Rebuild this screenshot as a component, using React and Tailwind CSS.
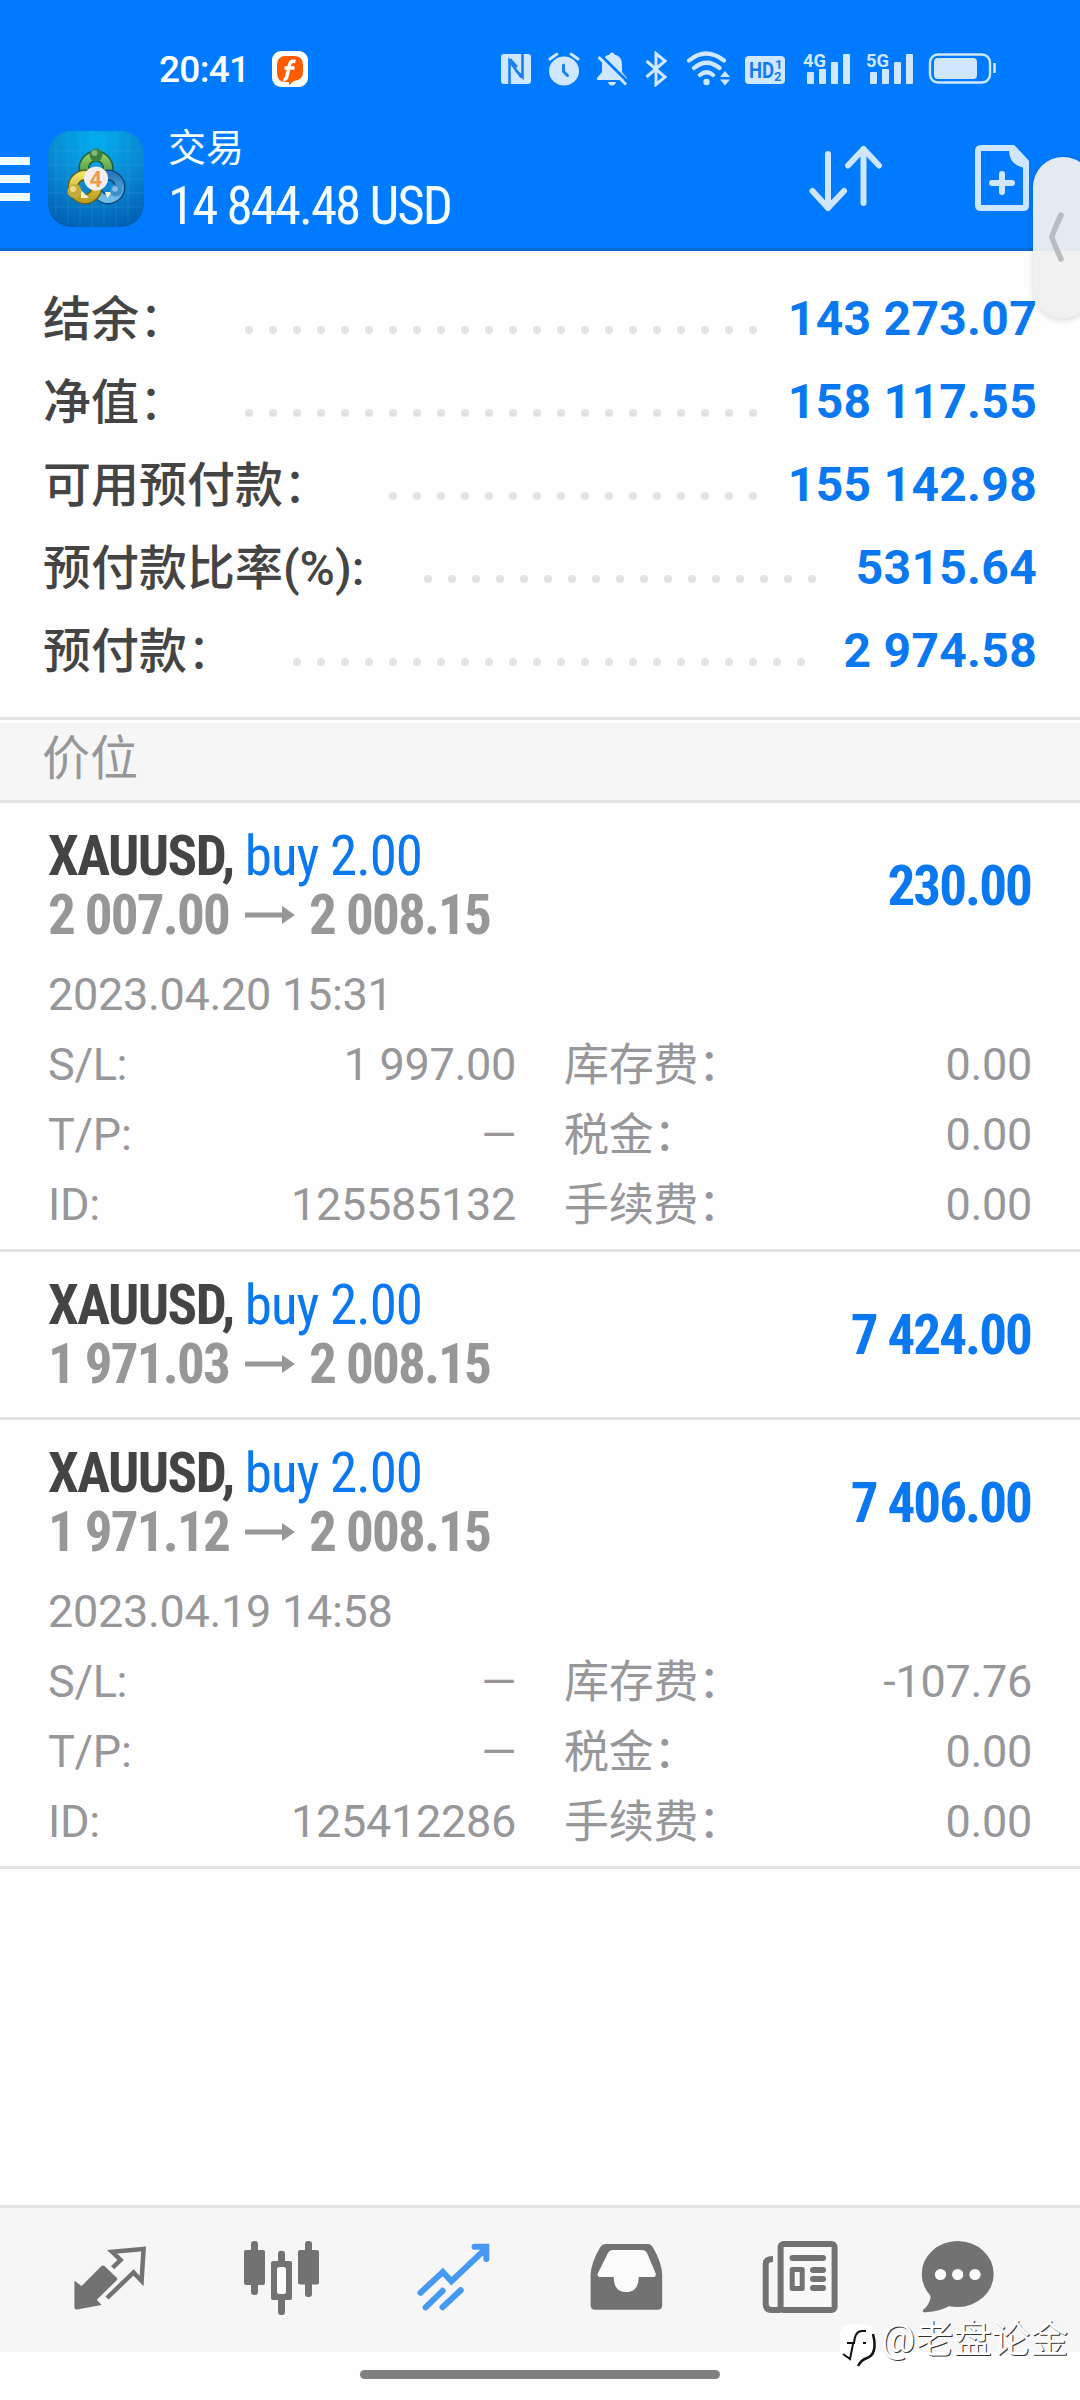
import React from 'react';

const summary = [
  { label: '结余：', value: '143 273.07', dots: 22, end: 'mr-[31px]' },
  { label: '净值：', value: '158 117.55', dots: 22, end: 'mr-[31px]' },
  { label: '可用预付款：', value: '155 142.98', dots: 16, end: 'mr-[31px]' },
  { label: '预付款比率(%):', value: '5315.64', dots: 17, end: 'mr-[40px]' },
  { label: '预付款：', value: '2 974.58', dots: 22, end: 'mr-[39px]' },
];

const positions = [
  {
    open: '2 007.00',
    profit: '230.00',
    time: '2023.04.20 15:31',
    rows: [
      ['S/L:', '1 997.00', '库存费：', '0.00'],
      ['T/P:', '—', '税金：', '0.00'],
      ['ID:', '125585132', '手续费：', '0.00'],
    ],
  },
  { open: '1 971.03', profit: '7 424.00' },
  {
    open: '1 971.12',
    profit: '7 406.00',
    time: '2023.04.19 14:58',
    rows: [
      ['S/L:', '—', '库存费：', '-107.76'],
      ['T/P:', '—', '税金：', '0.00'],
      ['ID:', '125412286', '手续费：', '0.00'],
    ],
  },
];

// the full-width colon stays in regular weight
const Label = ({ text }) => {
  const wide = text.endsWith('：');
  return (
    <>
      {wide ? text.slice(0, -1) : text}
      {wide && <span className="font-normal">：</span>}
    </>
  );
};

const Signal = ({ label, className }) => (
  <svg className={className} width="48" height="40" viewBox="0 -4 48 40" fill="currentColor">
    <text x="0" y="16" fontSize="19" fontWeight="700" textLength="23" lengthAdjust="spacingAndGlyphs">{label}</text>
    <rect x="4" y="21" width="7" height="12" rx="1" />
    <rect x="16" y="18" width="7" height="15" rx="1" />
    <rect x="28" y="11" width="7" height="22" rx="1" />
    <rect x="40" y="3" width="7" height="30" rx="1" />
  </svg>
);

const StatusBar = () => (
  <div className="flex h-[36px] items-center mt-[51px] text-[#cfe7ff]">
    <span className="w-[112px] ml-[159px] pt-[2px] text-[37px] leading-[36px] font-medium text-white tracking-[-0.7px]">20:41</span>
    <svg className="ml-px mr-[192px]" width="36" height="36" viewBox="0 0 36 36">
      <rect width="36" height="36" rx="9" fill="#fff" />
      <path d="M14 5h8q9 0 9 9v7q0 8-9 9l-5 4v-3h-3q-9 0-9-9v-8q0-9 9-9z" fill="#ff5c00" />
      <path d="M23.500 10.500q-5-1.500-6 3.500l-2.500 11q-1 4-3.500 3M12.500 17h10" fill="none" stroke="#fff" strokeWidth="3.500" />
    </svg>
    <svg width="32" height="36" viewBox="0 0 32 36">
      <rect x="1" y="3" width="30" height="30" rx="3" fill="currentColor" />
      <path d="M9.500 33V10l12 16.500M22.500 3v23l-7-7M10 8l7 8" fill="none" stroke="#1a7ff0" strokeWidth="2.600" />
    </svg>
    <svg className="ml-4" width="32" height="36" viewBox="0 0 32 36" fill="none" stroke="currentColor" strokeWidth="3" strokeLinecap="round">
      <ellipse cx="16" cy="20" rx="15" ry="14.500" fill="currentColor" stroke="none" />
      <path d="M2 8l7-5M30 8l-7-5" />
      <path d="M15.500 14v6.500l4 4" stroke="#1a7ff0" />
    </svg>
    <svg className="ml-4" width="32" height="36" viewBox="0 0 32 36" fill="currentColor">
      <path d="M16 1.500q2 0 2.500 2Q26 5 26 14v7l5 6v2H1v-2l5-6v-7Q6 5 13.500 3.500 14 1.500 16 1.500zM12 31h8q-1 3.500-4 3.500T12 31z" />
      <path d="M4.500 4L32 31" stroke="#007aff" strokeWidth="3" />
      <path d="M2.500 6L30 33.500" stroke="currentColor" strokeWidth="3" />
    </svg>
    <svg className="ml-4" width="24" height="36" viewBox="0 0 24 36" fill="none" stroke="currentColor" strokeWidth="3">
      <path d="M2.500 10L21 26l-9 7.500V2.500L21 10 2.500 26" />
    </svg>
    <svg className="ml-[18px]" width="44" height="36" viewBox="0 0 44 36" fill="none" stroke="currentColor" strokeWidth="4.200" strokeLinecap="round">
      <path d="M3 9.500q17-14 35 0M8 17q12.500-10.500 25.500 0M14 24q6.500-5.500 13 0" />
      <circle cx="20.500" cy="31" r="3.200" fill="currentColor" stroke="none" />
      <path d="M34 26l5-6 5 6zM34 28.500l5 6 5-6z" fill="currentColor" stroke="none" />
    </svg>
    <svg className="ml-[15px]" width="40" height="36" viewBox="0 0 40 36">
      <rect y="5" width="40" height="28" rx="4" fill="currentColor" />
      <g fill="#147cf2" fontWeight="700">
        <text x="4" y="27" fontSize="22" textLength="25" lengthAdjust="spacingAndGlyphs">HD</text>
        <text x="30" y="18" fontSize="13">1</text>
        <text x="29" y="30" fontSize="13">2</text>
      </g>
    </svg>
    <Signal label="4G" className="ml-[18px] -mt-1" />
    <Signal label="5G" className="ml-[15px] -mt-1" />
    <svg className="ml-[14px]" width="70" height="36" viewBox="0 0 70 36" fill="none" stroke="currentColor">
      <rect x="2" y="3.500" width="60" height="28" rx="8" strokeWidth="2.400" />
      <rect x="6" y="7" width="43" height="21" rx="4" fill="currentColor" stroke="none" />
      <path d="M66.500 12v10" strokeWidth="2.600" />
    </svg>
  </div>
);

const Logo = () => (
  <svg className="ml-[18px]" width="96" height="96" viewBox="0 0 96 96">
    <defs>
      <radialGradient id="tile" cx="0.5" cy="0.1" r="0.95">
        <stop offset="0" stopColor="#00aef0" />
        <stop offset="0.5" stopColor="#0a8ad2" />
        <stop offset="1" stopColor="#005fb2" />
      </radialGradient>
      <linearGradient id="green" x1="0" y1="0" x2="0" y2="1">
        <stop offset="0" stopColor="#8cc860" />
        <stop offset="1" stopColor="#3a8c3c" />
      </linearGradient>
      <linearGradient id="yellow" x1="0" y1="0" x2="0" y2="1">
        <stop offset="0" stopColor="#f0e060" />
        <stop offset="1" stopColor="#c0a020" />
      </linearGradient>
      <linearGradient id="blue" x1="0" y1="0" x2="0" y2="1">
        <stop offset="0" stopColor="#2878bc" />
        <stop offset="1" stopColor="#74bce8" />
      </linearGradient>
    </defs>
    <rect width="96" height="96" rx="23" fill="url(#tile)" />
    <path d="M8 10v76M20 2v92M32 0v96M44 0v96M56 0v96M68 0v96M80 4v88M4 20h88M0 34h96M0 48h96M0 62h96M2 76h92" stroke="#5cc4f0" strokeOpacity="0.18" fill="none" />
    <g fill="none">
      <circle cx="48" cy="37" r="12" stroke="#1e5c34" strokeWidth="11" />
      <circle cx="48" cy="37" r="12" stroke="url(#green)" strokeWidth="8" />
      <circle cx="60" cy="56" r="12" stroke="#0d4a85" strokeWidth="11" />
      <circle cx="60" cy="56" r="12" stroke="url(#blue)" strokeWidth="8" />
      <circle cx="37" cy="56" r="12" stroke="#5c6420" strokeWidth="11" />
      <circle cx="37" cy="56" r="12" stroke="url(#yellow)" strokeWidth="8" />
    </g>
    <path d="M33 67v-8l8 8zM57 61h8l-6 6z" fill="#e8f0d8" />
    <circle cx="48" cy="24" r="6.500" fill="#3c8040" />
    <circle cx="46.500" cy="22" r="3" fill="#80b878" />
    <circle cx="26.500" cy="60" r="7" fill="#c8aa38" />
    <circle cx="25" cy="58" r="3" fill="#ecdc88" />
    <circle cx="68" cy="59.500" r="6" fill="#3c90cc" />
    <circle cx="67" cy="58" r="2.800" fill="#84c0e8" />
    <circle cx="48" cy="47.500" r="12" fill="#f4eef0" />
    <text x="41.500" y="55.500" fontSize="22" fontWeight="700" fill="#f09a4c">4</text>
  </svg>
);

const Header = () => (
  <header className="h-[251px] bg-[#007aff] border-b-[3px] border-[#0a6ad0] flex flex-col">
    <StatusBar />
    <div className="flex items-center h-[96px] mt-[44px]">
      <div className="w-[30px] flex flex-col gap-[10px]">
        <div className="h-2 bg-[#f0fbff]" />
        <div className="h-2 bg-[#f0fbff]" />
        <div className="h-2 bg-[#f0fbff]" />
      </div>
      <Logo />
      <div className="ml-[24px] w-[640px] pt-[8px] text-[#f4fcff]">
        <div className="text-[38px] leading-[38px]">交易</div>
        <div className="mt-[7px] -mb-px text-[53px] leading-[64px] tracking-[-2px] font-stretch-condensed whitespace-nowrap">14 844.48 USD</div>
      </div>
      <svg className="shrink-0 ml-px" width="76" height="68" viewBox="0 1 76 68" fill="none" stroke="#cfe6ff" strokeWidth="6" strokeLinecap="round" strokeLinejoin="round">
        <path d="M19 10v54M3.500 47L19 64l16-17M54.500 59V5M39 21.500L54.500 5 70 21.500" />
      </svg>
      <svg className="ml-[90px] shrink-0" width="54" height="68" viewBox="0 1 54 68" fill="none" stroke="#cfe6ff" strokeWidth="6" strokeLinejoin="round">
        <path d="M3 7q0-3 3-3h32l13 14v43q0 3-3 3H6q-3 0-3-3z" />
        <path d="M34 4q-1 18 17 20V18L38 4z" fill="#cfe6ff" stroke="none" />
        <path d="M27 30v18M17 39h20" strokeLinecap="round" />
      </svg>
    </div>
  </header>
);

const Summary = () => (
  <section className="h-[466px] pt-[26px] pl-[43px] pr-[43px]">
    {summary.map((row) => (
      <div key={row.label} className="flex items-center h-[83px]">
        <span className="pt-[2px] text-[48px] leading-[83px] font-medium text-[#444] whitespace-nowrap">
          <Label text={row.label} />
        </span>
        <div className={`ml-auto mt-[23px] flex gap-4 ${row.end}`}>
          {Array.from({ length: row.dots }, (_, i) => (
            <div key={i} className="size-2 rounded-full bg-[#e3e3e3]" />
          ))}
        </div>
        <span className="text-[48px] leading-[83px] font-bold tracking-[0.3px] text-[#0a78f0] whitespace-nowrap">{row.value}</span>
      </div>
    ))}
  </section>
);

const Position = ({ item }) => (
  <div className="border-b-[3px] border-[#e2e2e2]">
    <div className="flex items-center justify-between h-[165px] pl-12 pr-[49px] font-bold font-stretch-condensed text-[55px] whitespace-nowrap">
      <div>
        <div className="leading-[59px] tracking-[-1.6px] text-[#444]">
          XAUUSD, <span className="font-normal tracking-[-1px] text-[#0a78f0]">buy 2.00</span>
        </div>
        <div className="flex items-center leading-[59px] tracking-[-1.8px] text-[#97979a]">
          {item.open}
          <svg className="ml-4 mr-[14px]" width="50" height="20" viewBox="0 0 50 20" fill="currentColor">
            <path d="M0 7.500h37V1l13 9-13 9v-6.500H0z" />
          </svg>
          2 008.15
        </div>
      </div>
      <div className="pt-[2px] tracking-[-1.9px] text-[#0a78f0]">{item.profit}</div>
    </div>
    {item.rows && (
      <div className="-mt-2 pl-12 pr-[48px] pb-[9px] text-[45px] leading-[70px] tracking-[-0.3px] text-[#97979a]">
        <div>{item.time}</div>
        {item.rows.map((row) => (
          <div key={row[0]} className="flex">
            <span>{row[0]}</span>
            <span className="ml-auto">{row[1]}</span>
            <div className="flex justify-between w-[468px] ml-[48px]">
              <span className="pt-px -mb-px">
                <Label text={row[2]} />
              </span>
              <span>{row[3]}</span>
            </div>
          </div>
        ))}
      </div>
    )}
  </div>
);

const TabBar = () => (
  <nav className="flex h-[147px] pt-[30px] bg-[#f6f6f6] border-t-[3px] border-[#e2e2e2] text-[#727272]">
    <svg className="ml-[70px]" width="80" height="80" viewBox="0 -2 80 80" fill="currentColor">
      <path d="M4.400 40.700l7.200 5.300L31 26.500q2-2 4 0l11.500 11q1.500 1.500 0 3L26.800 59.700l4.800 5.300L7 69.500q-2.600.3-2.600-2z" />
      <path d="M42.600 27.700l8-7.700-8.500-8.300L73.600 9l-2 32-8-8.600L37 58" fill="none" stroke="currentColor" strokeWidth="4.500" />
    </svg>
    <svg className="ml-[90px]" width="80" height="80" viewBox="0 0 80 80" fill="currentColor">
      <rect x="4" y="12" width="21" height="35" rx="2" />
      <rect x="11" y="3" width="7" height="54" rx="3" />
      <rect x="38" y="12.700" width="7" height="64.300" rx="3" />
      <rect x="31" y="23" width="21" height="39" rx="2" />
      <rect x="37" y="29" width="9" height="27" rx="2.500" fill="#fff" />
      <rect x="58" y="12" width="21" height="34.500" rx="2" />
      <rect x="65" y="3" width="7" height="56" rx="3" />
    </svg>
    <svg className="ml-[94px]" width="80" height="80" viewBox="0 -2 80 80" fill="none" stroke="#4699f2" strokeWidth="6" strokeLinecap="round">
      <path d="M6.500 52.700L28.800 32l8.600 9.300L71.500 9M60.500 6.700h11.800V19" />
      <path d="M11.600 67.300l17-16.500M28.500 67.300l18.200-17" />
    </svg>
    <svg className="ml-[92px]" width="80" height="80" viewBox="0 0 80 80" fill="currentColor">
      <path d="M20 6h42q3 0 5 3.500Q76 25 76.200 37v30q0 4.700-4.500 4.700H9q-4.400 0-4.400-4.700V37Q5 25 14 9.500 16 6 20 6z" />
      <path d="M27 12q-3.500 0-5 3L12 35q-1.500 4 2 4h13.700q0 15 12.500 15t12.500-15h14q4 0 2.800-4L61 15q-1.500-3-5-3z" fill="#fbfbfb" />
    </svg>
    <svg className="ml-[94px]" width="80" height="80" viewBox="0 0 80 80" fill="none" stroke="currentColor" strokeWidth="6">
      <path d="M13 21q-7.300 0-7.300 5v40q0 6 6 6h9" />
      <rect x="20.600" y="6" width="54" height="66" rx="3" fill="#f8f8f8" />
      <path d="M32.500 20h30.500M53 32h10M53 41h10M53 50h10" strokeLinecap="round" />
      <rect x="32.200" y="31.500" width="10" height="19" strokeWidth="5" strokeLinejoin="round" />
    </svg>
    <svg className="ml-[78px]" width="80" height="80" viewBox="0 0 80 80" fill="currentColor">
      <ellipse cx="39.700" cy="36" rx="36" ry="33" />
      <path d="M9 52q5 6 3 10-2 6-7 10-1 2.500 3 2.300 14-1 24-6.500z" />
      <g fill="#fff">
        <circle cx="22.500" cy="36.500" r="5.600" />
        <circle cx="39.700" cy="36.500" r="5.600" />
        <circle cx="57" cy="36.500" r="5.600" />
      </g>
    </svg>
  </nav>
);

const App = () => (
  <div className="relative flex flex-col w-[1080px] h-[2400px] overflow-hidden bg-[#fefefe] font-['Roboto','Noto_Sans_CJK_SC',sans-serif]">
    <Header />
    <Summary />
    <div className="h-[86px] pt-[3px] border-y-[3px] border-[#e2e2e2]">
      <div className="h-[77px] pl-[42px] bg-[#f6f6f6] text-[48px] leading-[71px] text-[#97979a]">价位</div>
    </div>
    <main className="flex-1">
      {positions.map((item) => (
        <Position key={item.open} item={item} />
      ))}
    </main>
    <TabBar />
    <div className="h-[48px] pt-[18px]">
      <div className="mx-auto w-[360px] h-[9px] rounded-full bg-[#808080]" />
    </div>

    {/* edge panel handle */}
    <div className="absolute left-[1033px] top-[157px] w-[60px] h-[161px] rounded-[34px] bg-[#f0f0f0]/95 shadow-[0_2px_6px_rgba(0,0,0,0.15)]">
      <svg className="mt-[54px] ml-[15px]" width="18" height="52" viewBox="0 0 18 52" fill="none" stroke="#b9bcc0" strokeWidth="5.500" strokeLinecap="round">
        <path d="M13 4Q4 24 4 26t9 22" />
      </svg>
    </div>

    {/* watermark */}
    <div className="absolute left-[839px] top-[2312px] flex items-center text-white">
      <svg className="mt-2" width="42" height="50" viewBox="0 0 42 50" fill="none">
        <path d="M12 4h12q13 0 13 13v8q0 12-9 16-7 2-9 6l-1-5q-17 0-17-12V17Q1 4 12 4z" fill="#fff" />
        <path d="M27 11h-4q-7 0-8 12H8M24 23h3M14 24l-3 15-7-5" stroke="#111" strokeWidth="2" />
        <path d="M34 14q5 20-6 24-6 2-9 8" stroke="#111" strokeWidth="2.500" />
      </svg>
      <span className="-mt-1 text-[38px] leading-[44px] tracking-[0.3px] whitespace-nowrap [text-shadow:1px_1px_0_#333]">@老盘论金</span>
    </div>
  </div>
);

export default App;
